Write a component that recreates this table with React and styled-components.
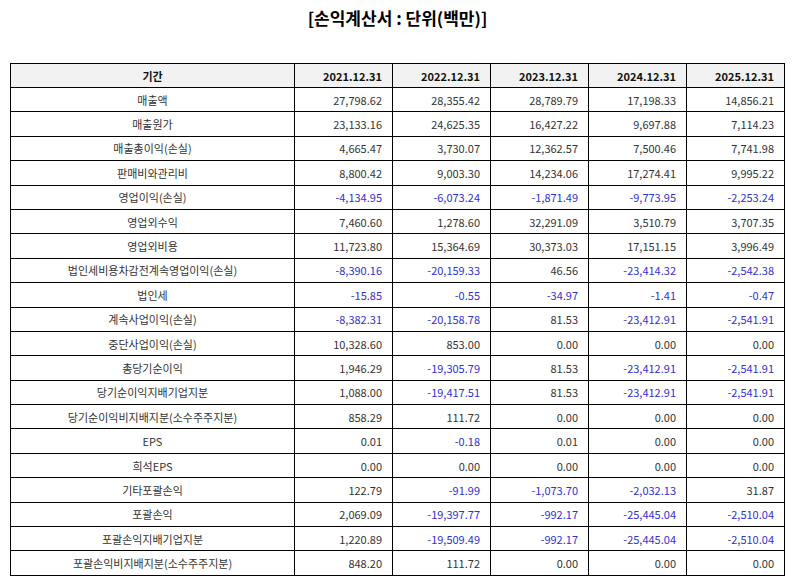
import React from "react";
import styled, { createGlobalStyle } from "styled-components";

const GlobalStyle = createGlobalStyle`
  html, body {
    margin: 0;
    padding: 0;
    background: #fff;
  }
  body {
    font-family: "Noto Sans CJK KR", "Noto Sans", sans-serif;
  }
`;

const Page = styled.div`
  padding: 0 9px 0 10px;
`;

const Title = styled.h1`
  margin: 0;
  padding-top: 6px;
  height: 63px;
  box-sizing: border-box;
  text-align: center;
  font-size: 17px;
  font-weight: 700;
  color: #000;
  line-height: 24px;
`;

const Table = styled.table`
  width: 100%;
  border-collapse: collapse;
  table-layout: fixed;
  font-size: 11px;
  color: #333;
`;

const HeadCell = styled.th`
  background: #f2f2f2;
  border: 1px solid #000;
  height: 23px;
  padding: 0 10px;
  font-weight: 700;
  color: #111;
  text-align: ${(props) => (props.$label ? "center" : "right")};
`;

const LabelCell = styled.td`
  border: 1px solid #000;
  height: 23.4px;
  padding: 0 6px;
  text-align: center;
`;

const ValueCell = styled.td`
  border: 1px solid #000;
  height: 23.4px;
  padding: 0 10px;
  text-align: right;
  color: ${(props) => (props.$negative ? "#3030d0" : "#333")};
`;

const years = ["2021.12.31", "2022.12.31", "2023.12.31", "2024.12.31", "2025.12.31"];

const rows = [
  ["매출액", "27,798.62", "28,355.42", "28,789.79", "17,198.33", "14,856.21"],
  ["매출원가", "23,133.16", "24,625.35", "16,427.22", "9,697.88", "7,114.23"],
  ["매출총이익(손실)", "4,665.47", "3,730.07", "12,362.57", "7,500.46", "7,741.98"],
  ["판매비와관리비", "8,800.42", "9,003.30", "14,234.06", "17,274.41", "9,995.22"],
  ["영업이익(손실)", "-4,134.95", "-6,073.24", "-1,871.49", "-9,773.95", "-2,253.24"],
  ["영업외수익", "7,460.60", "1,278.60", "32,291.09", "3,510.79", "3,707.35"],
  ["영업외비용", "11,723.80", "15,364.69", "30,373.03", "17,151.15", "3,996.49"],
  ["법인세비용차감전계속영업이익(손실)", "-8,390.16", "-20,159.33", "46.56", "-23,414.32", "-2,542.38"],
  ["법인세", "-15.85", "-0.55", "-34.97", "-1.41", "-0.47"],
  ["계속사업이익(손실)", "-8,382.31", "-20,158.78", "81.53", "-23,412.91", "-2,541.91"],
  ["중단사업이익(손실)", "10,328.60", "853.00", "0.00", "0.00", "0.00"],
  ["총당기순이익", "1,946.29", "-19,305.79", "81.53", "-23,412.91", "-2,541.91"],
  ["당기순이익지배기업지분", "1,088.00", "-19,417.51", "81.53", "-23,412.91", "-2,541.91"],
  ["당기순이익비지배지분(소수주주지분)", "858.29", "111.72", "0.00", "0.00", "0.00"],
  ["EPS", "0.01", "-0.18", "0.01", "0.00", "0.00"],
  ["희석EPS", "0.00", "0.00", "0.00", "0.00", "0.00"],
  ["기타포괄손익", "122.79", "-91.99", "-1,073.70", "-2,032.13", "31.87"],
  ["포괄손익", "2,069.09", "-19,397.77", "-992.17", "-25,445.04", "-2,510.04"],
  ["포괄손익지배기업지분", "1,220.89", "-19,509.49", "-992.17", "-25,445.04", "-2,510.04"],
  ["포괄손익비지배지분(소수주주지분)", "848.20", "111.72", "0.00", "0.00", "0.00"],
];

const App = () => {
  return (
    <Page>
      <GlobalStyle />
      <Title>[손익계산서 : 단위(백만)]</Title>
      <Table>
        <colgroup>
          <col style={{ width: 284 }} />
          <col />
          <col />
          <col />
          <col />
          <col />
        </colgroup>
        <thead>
          <tr>
            <HeadCell $label>기간</HeadCell>
            {years.map((y) => (
              <HeadCell key={y}>{y}</HeadCell>
            ))}
          </tr>
        </thead>
        <tbody>
          {rows.map(([label, ...values]) => (
            <tr key={label}>
              <LabelCell>{label}</LabelCell>
              {values.map((v, i) => (
                <ValueCell key={i} $negative={v.startsWith("-")}>
                  {v}
                </ValueCell>
              ))}
            </tr>
          ))}
        </tbody>
      </Table>
    </Page>
  );
};

export default App;
